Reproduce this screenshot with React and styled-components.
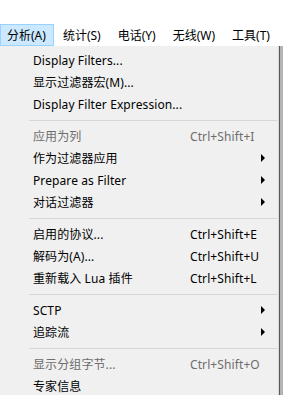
import React from "react"
import styled, { createGlobalStyle } from "styled-components"

const GlobalStyle = createGlobalStyle`
  html, body {
    margin: 0;
    padding: 0;
    background: #ffffff;
  }
  body {
    font-family: "Segoe UI", "Noto Sans", "Noto Sans CJK SC", sans-serif;
    font-size: 12px;
    color: #000;
  }
`

const menus = ["分析(A)", "统计(S)", "电话(Y)", "无线(W)", "工具(T)"]

const items = [
  { label: "Display Filters..." },
  { label: "显示过滤器宏(M)..." },
  { label: "Display Filter Expression..." },
  { sep: true },
  { label: "应用为列", shortcut: "Ctrl+Shift+I", disabled: true },
  { label: "作为过滤器应用", sub: true },
  { label: "Prepare as Filter", sub: true },
  { label: "对话过滤器", sub: true },
  { sep: true },
  { label: "启用的协议...", shortcut: "Ctrl+Shift+E" },
  { label: "解码为(A)...", shortcut: "Ctrl+Shift+U" },
  { label: "重新载入 Lua 插件", shortcut: "Ctrl+Shift+L" },
  { sep: true },
  { label: "SCTP", sub: true },
  { label: "追踪流", sub: true },
  { sep: true },
  { label: "显示分组字节...", shortcut: "Ctrl+Shift+O", disabled: true },
  { label: "专家信息" },
]

export default function App() {
  return (
    <Page>
      <GlobalStyle />
      <MenuBar>
        {menus.map((m, i) => (
          <BarItem key={m} active={i === 0}>{m}</BarItem>
        ))}
      </MenuBar>
      <Below>
        <Dropdown>
          {items.map((it, i) =>
            it.sep ? (
              <Separator key={i} />
            ) : (
              <Item key={i} disabled={it.disabled}>
                <Label>{it.label}</Label>
                <Shortcut>{it.shortcut}</Shortcut>
                <ArrowCell>{it.sub && <Arrow />}</ArrowCell>
              </Item>
            )
          )}
        </Dropdown>
        <AppEdge />
      </Below>
    </Page>
  )
}

const Page = styled.div`
  width: 283px;
  height: 395px;
  overflow: hidden;
  padding-top: 24px;
  box-sizing: border-box;
`

const MenuBar = styled.div`
  display: flex;
  height: 22px;
  background: #fff;
`

const BarItem = styled.div`
  display: flex;
  align-items: center;
  padding: 0 7px 0 6px;
  margin-right: 2px;
  border: 1px solid ${(p) => (p.active ? "#99d1ff" : "transparent")};
  background: ${(p) => (p.active ? "#cce8ff" : "transparent")};
  white-space: nowrap;
`

const Below = styled.div`
  display: flex;
  height: 400px;
`

const Dropdown = styled.div`
  width: 279px;
  background: #f0f0f0;
  border-right: 1px solid #d9d9d9;
  padding: 3px 0 0 0;
  box-sizing: border-box;
`

const AppEdge = styled.div`
  flex: 1;
  background: #b4b4b4;
  border-left: 1px solid #5a5a5a;
`

const Item = styled.div`
  display: flex;
  align-items: center;
  height: 22px;
  padding-left: 33px;
  color: ${(p) => (p.disabled ? "#6d6d6d" : "#000")};
  white-space: nowrap;
  letter-spacing: 0.1px;
`

const Label = styled.span`
  width: 157px;
`

const Shortcut = styled.span`
  width: 71px;
`

const ArrowCell = styled.span`
  width: 10px;
  display: flex;
  align-items: center;
`

const Arrow = styled.span`
  width: 0;
  height: 0;
  border-top: 4px solid transparent;
  border-bottom: 4px solid transparent;
  border-left: 4px solid #000;
`

const Separator = styled.div`
  height: 10px;
  display: flex;
  align-items: center;
  padding-left: 29px;
  padding-right: 1px;

  &::after {
    content: "";
    flex: 1;
    height: 1px;
    background: #d7d7d7;
  }
`
